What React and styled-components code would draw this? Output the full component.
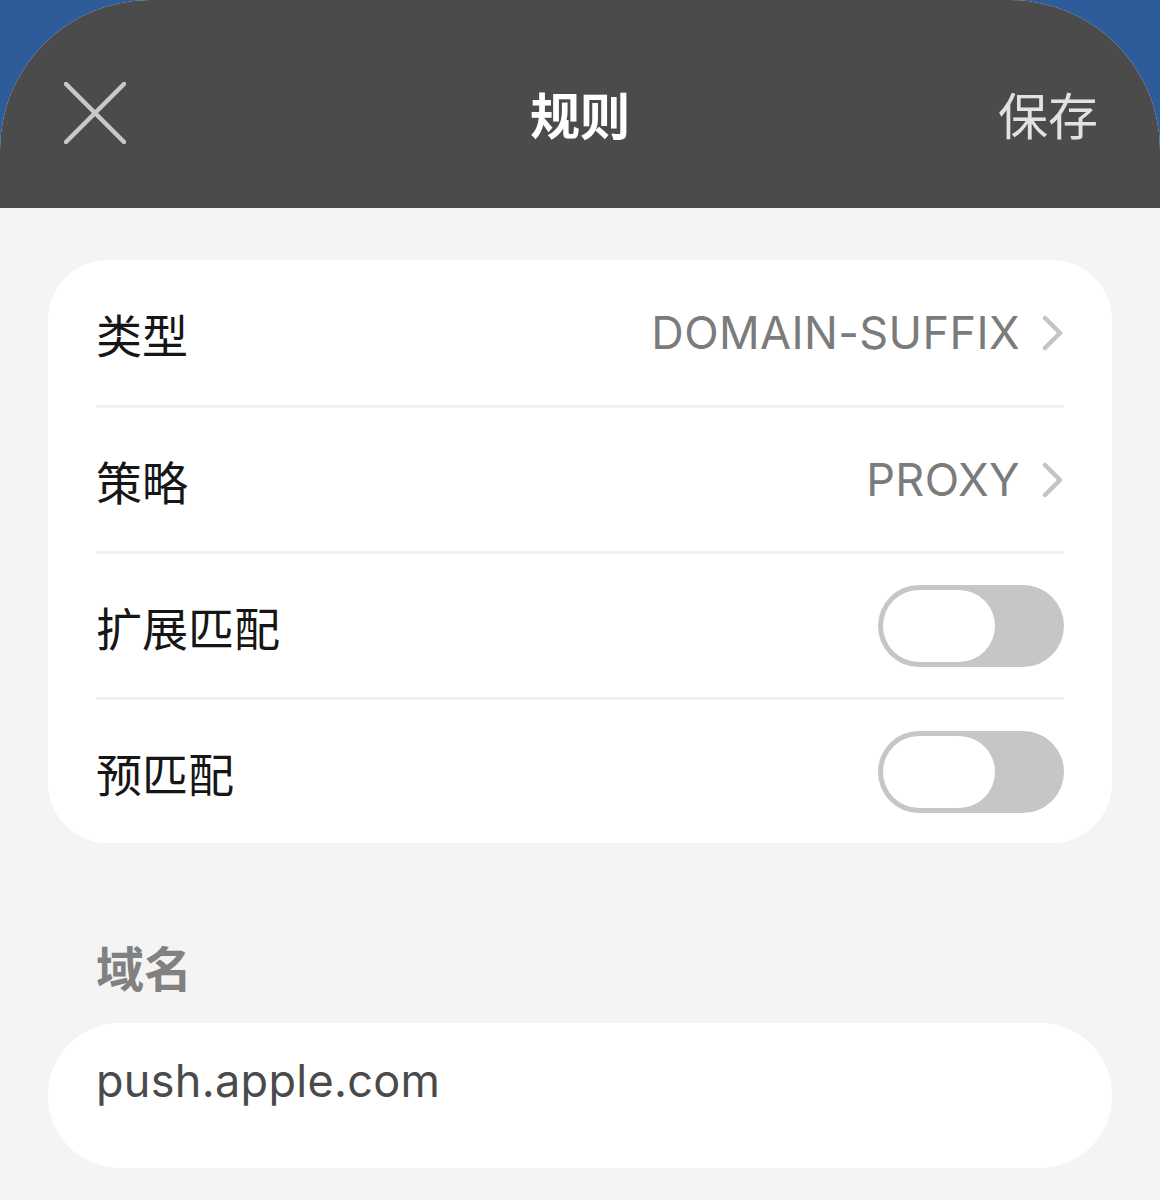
import React from 'react';
import styled, { createGlobalStyle } from 'styled-components';

const Global = createGlobalStyle`
  html, body {
    margin: 0;
    padding: 0;
    background: #2e5b9a;
  }
  body {
    font-family: "Inter", "Noto Sans CJK SC", sans-serif;
  }
`;

const Sheet = styled.div`
  width: 1160px;
  height: 1200px;
  background: #f4f4f4;
  border-radius: 150px 150px 0 0;
  overflow: hidden;
  display: flex;
  flex-direction: column;
`;

const Header = styled.header`
  height: 208px;
  background: #4b4b4b;
  display: grid;
  grid-template-columns: 1fr auto 1fr;
  align-items: center;
  padding: 0 64px;
  box-sizing: border-box;
`;

const CloseButton = styled.button`
  justify-self: start;
  background: none;
  border: 0;
  padding: 0;
  width: 62px;
  height: 62px;
  display: flex;
  margin-top: 18px;
`;

const Title = styled.h1`
  margin: 0;
  margin-top: 18px;
  font-family: "Noto Sans CJK SC", sans-serif;
  font-size: 50px;
  font-weight: 700;
  color: #ffffff;
`;

const Save = styled.span`
  justify-self: end;
  margin-top: 18px;
  margin-right: -2px;
  font-family: "Noto Sans CJK SC", sans-serif;
  font-size: 50px;
  font-weight: 400;
  color: #e2e2e2;
`;

const Content = styled.main`
  padding: 52px 48px 0 48px;
  display: flex;
  flex-direction: column;
`;

const Card = styled.section`
  background: #ffffff;
  border-radius: 60px;
  padding: 0 48px;
`;

const Row = styled.div`
  height: 145px;
  display: flex;
  align-items: center;
  justify-content: space-between;
  & + & {
    border-top: 3px solid #f0f0f0;
    height: 143px;
  }
`;

const Label = styled.span`
  font-family: "Noto Sans CJK SC", sans-serif;
  font-size: 46px;
  color: #161616;
`;

const Value = styled.span`
  display: flex;
  align-items: center;
  gap: 22px;
  font-family: "Inter", "Noto Sans CJK SC", sans-serif;
  font-size: 45px;
  color: #7b7b7b;
  letter-spacing: 0.4px;
`;

const Toggle = styled.div`
  width: 186px;
  height: 82px;
  border-radius: 41px;
  background: #c6c6c8;
  padding: 5px;
  box-sizing: border-box;
  display: flex;
`;

const Knob = styled.div`
  width: 112px;
  height: 72px;
  border-radius: 36px;
  background: #ffffff;
`;

const SectionTitle = styled.h2`
  margin: 88px 0 22px 48px;
  font-family: "Noto Sans CJK SC", sans-serif;
  font-size: 48px;
  font-weight: 700;
  color: #818181;
`;

const Field = styled.div`
  height: 145px;
  border-radius: 72px;
  background: #ffffff;
  padding: 0 48px 30px 48px;
  display: flex;
  align-items: center;
  box-sizing: border-box;
  font-family: "Inter", sans-serif;
  font-size: 45px;
  letter-spacing: 0.3px;
  color: #4a4a4a;
`;

const Chevron = () => (
  <svg width="22" height="36" viewBox="0 0 22 36" fill="none">
    <path d="M3 3 L18 18 L3 33" stroke="#c4c4c6" strokeWidth="4.5" strokeLinecap="round" strokeLinejoin="round" />
  </svg>
);

const XIcon = () => (
  <svg width="62" height="62" viewBox="0 0 62 62" fill="none">
    <path d="M2 2 L60 60 M60 2 L2 60" stroke="#c9c9c9" strokeWidth="4.5" strokeLinecap="round" />
  </svg>
);

const rows = [
  { label: '类型', value: 'DOMAIN-SUFFIX' },
  { label: '策略', value: 'PROXY' },
  { label: '扩展匹配', toggle: true },
  { label: '预匹配', toggle: true },
];

export default function App() {
  return (
    <>
      <Global />
      <Sheet>
        <Header>
          <CloseButton aria-label="close">
            <XIcon />
          </CloseButton>
          <Title>规则</Title>
          <Save>保存</Save>
        </Header>
        <Content>
          <Card>
            {rows.map((r) => (
              <Row key={r.label}>
                <Label>{r.label}</Label>
                {r.toggle ? (
                  <Toggle>
                    <Knob />
                  </Toggle>
                ) : (
                  <Value>
                    {r.value}
                    <Chevron />
                  </Value>
                )}
              </Row>
            ))}
          </Card>
          <SectionTitle>域名</SectionTitle>
          <Field>push.apple.com</Field>
        </Content>
      </Sheet>
    </>
  );
}
